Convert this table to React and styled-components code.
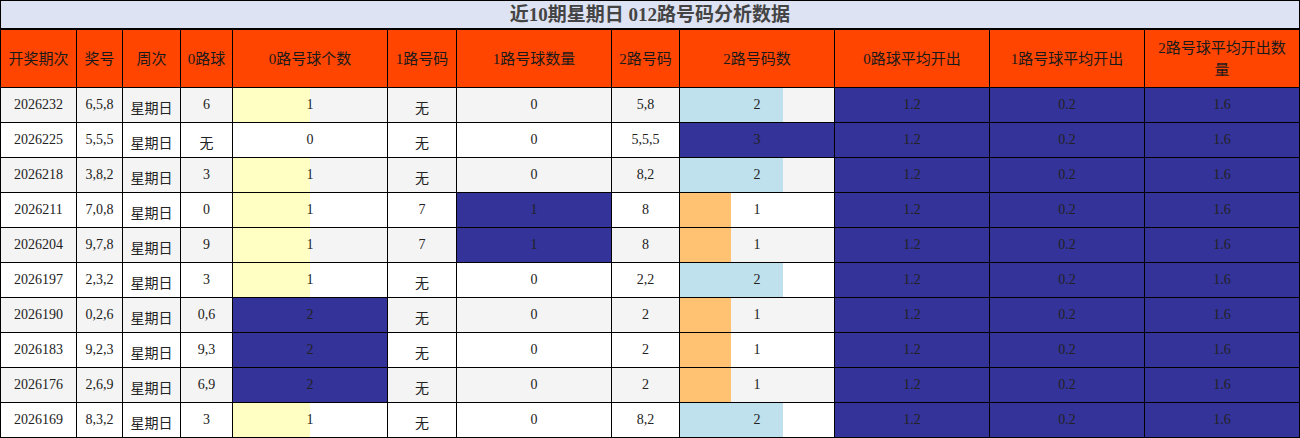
import React from "react";
import styled, { createGlobalStyle } from "styled-components";

const GlobalStyle = createGlobalStyle`
  html, body {
    margin: 0;
    padding: 0;
    background: #fff;
  }
  body {
    font-family: "Liberation Serif", "Noto Sans CJK SC", serif;
  }
`;

const NAVY = "#333399";
const YELLOW = "#ffffc4";
const SKY = "#bee1ed";
const ORANGE = "#ffc272";

const COLUMNS = [
  "开奖期次",
  "奖号",
  "周次",
  "0路球",
  "0路号球个数",
  "1路号码",
  "1路号球数量",
  "2路号码",
  "2路号码数",
  "0路球平均开出",
  "1路号球平均开出",
  "2路号球平均开出数量",
];

const ROWS = [
  ["2026232", "6,5,8", "6", 1, "无", 0, "5,8", 2],
  ["2026225", "5,5,5", "无", 0, "无", 0, "5,5,5", 3],
  ["2026218", "3,8,2", "3", 1, "无", 0, "8,2", 2],
  ["2026211", "7,0,8", "0", 1, "7", 1, "8", 1],
  ["2026204", "9,7,8", "9", 1, "7", 1, "8", 1],
  ["2026197", "2,3,2", "3", 1, "无", 0, "2,2", 2],
  ["2026190", "0,2,6", "0,6", 2, "无", 0, "2", 1],
  ["2026183", "9,2,3", "9,3", 2, "无", 0, "2", 1],
  ["2026176", "2,6,9", "6,9", 2, "无", 0, "2", 1],
  ["2026169", "8,3,2", "3", 1, "无", 0, "8,2", 2],
];

// data bar styles, like a spreadsheet's conditional format
const zeroBar = (n) =>
  n >= 2 ? { color: NAVY, pct: 100 } : n === 1 ? { color: YELLOW, pct: 50 } : null;
const oneBar = (n) => (n >= 1 ? { color: NAVY, pct: 100 } : null);
const twoBar = (n) =>
  n >= 3
    ? { color: NAVY, pct: 100 }
    : n === 2
    ? { color: SKY, pct: 67 }
    : n === 1
    ? { color: ORANGE, pct: 33 }
    : null;

const Page = styled.div`
  width: 1300px;
`;

const Title = styled.div`
  height: 27px;
  border: 1px solid #000;
  background: #dde3f2;
  color: #444;
  font-size: 19px;
  font-weight: bold;
  line-height: 27px;
  text-align: center;
`;

const Grid = styled.div`
  display: grid;
  grid-template-columns: 75px 45px 57px 51px 154px 68px 154px 67px 154px 154px 154px 154px;
  grid-template-rows: 57px repeat(10, 34px);
  gap: 1px;
  padding: 1px;
  background: #000;
`;

const Head = styled.div`
  display: flex;
  align-items: center;
  justify-content: center;
  padding: ${({ $wrap }) => ($wrap ? "0 8px" : "0")};
  background: #ff4500;
  color: #1a1a1a;
  font-size: 15px;
  line-height: 22px;
  text-align: center;
  white-space: ${({ $wrap }) => ($wrap ? "normal" : "nowrap")};
  overflow: hidden;
`;

const Cell = styled.div`
  display: flex;
  align-items: center;
  justify-content: center;
  background: ${({ $odd }) => ($odd ? "#f4f4f4" : "#fff")};
  color: #222;
  font-size: 14px;
  white-space: nowrap;
`;

const BarCell = styled(Cell)`
  background: ${({ $odd, $bar }) => {
    const base = $odd ? "#f4f4f4" : "#fff";
    if (!$bar) return base;
    return `linear-gradient(to right, ${$bar.color} ${$bar.pct}%, ${base} ${$bar.pct}%)`;
  }};
`;

const Han = styled.span`
  padding-top: 3px;
`;

export default function App() {
  return (
    <Page>
      <GlobalStyle />
      <Title>近10期星期日 012路号码分析数据</Title>
      <Grid>
        {COLUMNS.map((c, i) => (
          <Head key={c} $wrap={i === COLUMNS.length - 1}>
            {c}
          </Head>
        ))}
        {ROWS.map(([issue, nums, zero, zc, one, oc, two, tc], i) => {
          const odd = i % 2 === 0;
          return (
            <React.Fragment key={issue}>
              <Cell $odd={odd}>{issue}</Cell>
              <Cell $odd={odd}>{nums}</Cell>
              <Cell $odd={odd}>
                <Han>星期日</Han>
              </Cell>
              <Cell $odd={odd}>{zero === "无" ? <Han>无</Han> : zero}</Cell>
              <BarCell $odd={odd} $bar={zeroBar(zc)}>
                {zc}
              </BarCell>
              <Cell $odd={odd}>{one === "无" ? <Han>无</Han> : one}</Cell>
              <BarCell $odd={odd} $bar={oneBar(oc)}>
                {oc}
              </BarCell>
              <Cell $odd={odd}>{two}</Cell>
              <BarCell $odd={odd} $bar={twoBar(tc)}>
                {tc}
              </BarCell>
              <BarCell $odd={odd} $bar={{ color: NAVY, pct: 100 }}>
                1.2
              </BarCell>
              <BarCell $odd={odd} $bar={{ color: NAVY, pct: 100 }}>
                0.2
              </BarCell>
              <BarCell $odd={odd} $bar={{ color: NAVY, pct: 100 }}>
                1.6
              </BarCell>
            </React.Fragment>
          );
        })}
      </Grid>
    </Page>
  );
}
